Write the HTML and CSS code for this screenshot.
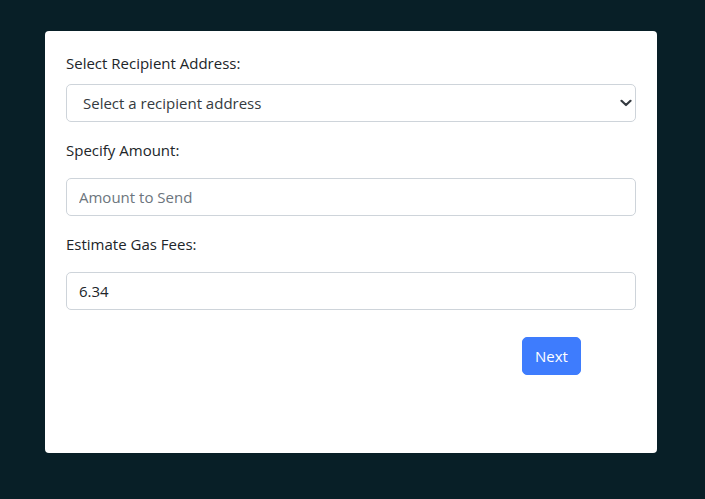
FILE: index.html
```html
<!DOCTYPE html>
<html lang="en">
<head>
<meta charset="utf-8">
<title>Send</title>
<link rel="stylesheet" href="styles.css">
</head>
<body>
<main class="page">
  <form class="card">
    <div class="group group-first">
      <label class="label" for="recipient">Select Recipient Address:</label>
      <div class="select-wrap">
        <select id="recipient" class="control select">
          <option>Select a recipient address</option>
        </select>
        <svg class="chevron" width="12" height="8" viewBox="0 0 12 8" aria-hidden="true">
          <path d="M1.5 1.8 L6 6 L10.5 1.8" fill="none" stroke="#343a40" stroke-width="2.2" stroke-linecap="round" stroke-linejoin="round"/>
        </svg>
      </div>
    </div>
    <div class="group">
      <label class="label" for="amount">Specify Amount:</label>
      <input id="amount" class="control" type="text" placeholder="Amount to Send">
    </div>
    <div class="group">
      <label class="label" for="gas">Estimate Gas Fees:</label>
      <input id="gas" class="control" type="text" value="6.34">
    </div>
    <div class="actions">
      <button type="button" class="btn">Next</button>
    </div>
  </form>
</main>
</body>
</html>
```
FILE: styles.css
```css
* { box-sizing: border-box; }
html, body { margin: 0; padding: 0; }
body {
  background: #081f27;
  font-family: "Open Sans", "Noto Sans", sans-serif;
  font-size: 15px;
  line-height: 24px;
  color: #212529;
  width: 705px;
  height: 499px;
  overflow: hidden;
}
.page {
  padding: 31px 48px 0 45px;
}
.card {
  width: 612px;
  height: 422px;
  background: #fff;
  border-radius: 4px;
  padding: 20px 21px;
  display: flex;
  flex-direction: column;
}
.group { display: flex; flex-direction: column; margin-bottom: 16px; }
.label { display: block; margin-bottom: 16px; }
.group-first .label { margin-bottom: 9px; }
.control {
  display: block;
  width: 100%;
  height: 38px;
  border: 1px solid #ced4da;
  border-radius: 5px;
  padding: 6px 12px;
  font: inherit;
  color: #212529;
  background: #fff;
  outline: none;
}
.control::placeholder { color: #6c757d; opacity: 1; }
.select-wrap { position: relative; }
.select {
  appearance: none;
  -webkit-appearance: none;
  padding-left: 16px;
  color: #343a40;
}
.chevron { position: absolute; top: 15px; width: 12px; height: 8px; right: 4px; }
.actions {
  display: flex;
  justify-content: flex-end;
  padding-right: 55px;
  margin-top: 11px;
}
.btn {
  height: 38px;
  width: 59px;
  background: #3e7cfd;
  color: #fff;
  border: 1px solid #3e7cfd;
  border-radius: 5px;
  font: inherit;
  font-size: 15px;
  padding: 0;
}
```
